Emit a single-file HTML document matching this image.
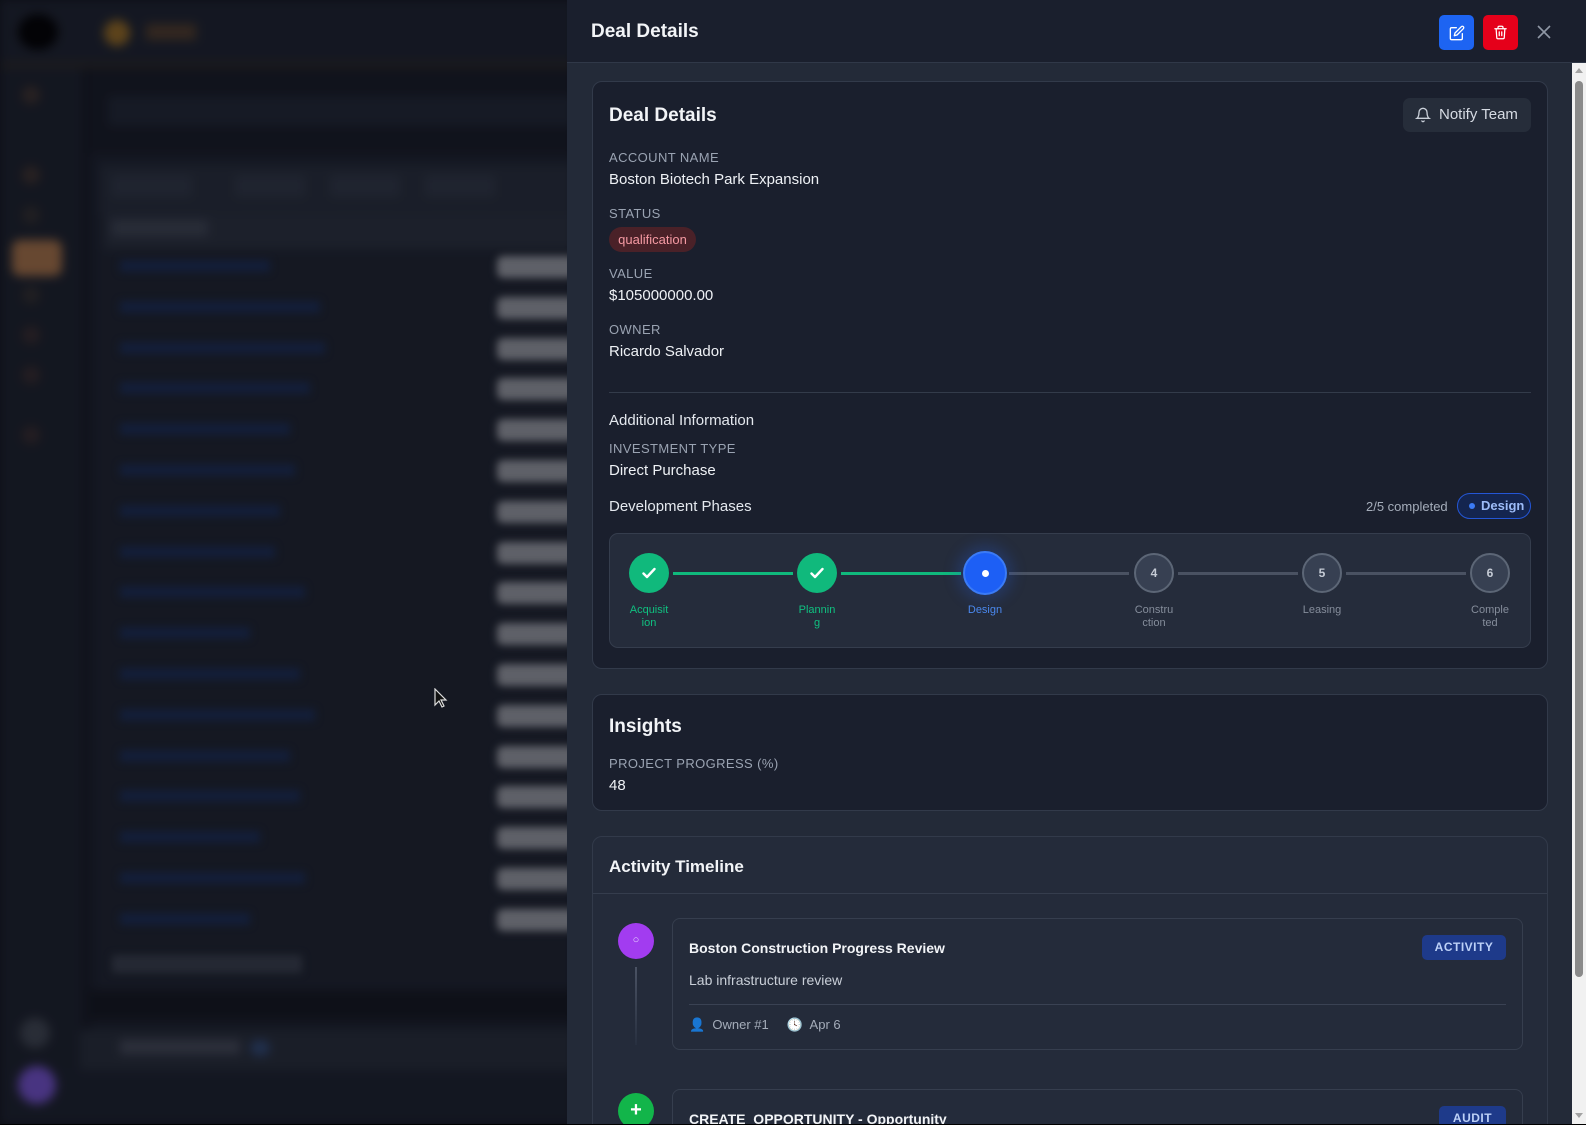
<!DOCTYPE html>
<html><head><meta charset="utf-8">
<style>
*{box-sizing:border-box;margin:0;padding:0}
html,body{width:1586px;height:1125px;overflow:hidden}
body{background:#0f1219;font-family:"Liberation Sans",sans-serif;position:relative}
.abs{position:absolute}
#bg{position:absolute;left:0;top:0;width:575px;height:1125px;background:#1a1f2a;filter:blur(5px);overflow:hidden}
#bg div{position:absolute}
#panel{position:absolute;left:567px;top:0;width:1019px;height:1124px;background:#232a38;overflow:hidden}
#hdr{position:absolute;left:0;top:0;width:1019px;height:63px;background:#1a1f2d;border-bottom:1px solid #303848}
.card{position:absolute;left:25px;width:956px;border:1px solid #323a4a;border-radius:10px;background:#1a1f2d;overflow:hidden}
.lbl{position:absolute;left:16px;font-size:13px;color:#9aa3b2;letter-spacing:.4px}
.val{position:absolute;left:16px;font-size:15px;color:#eef1f5}
.circ{position:absolute;top:19px;width:40px;height:40px;border-radius:50%;margin-left:-20px;display:flex;align-items:center;justify-content:center;font-size:12px;font-weight:bold}
.done{background:#10b97c;color:#fff}
.todo{background:#374052;border:2px solid #5c6676;color:#c5cbd5}
.line{position:absolute;top:38px;height:3px}
.plbl{position:absolute;top:70px;width:60px;margin-left:-30px;text-align:center;font-size:11px;line-height:13px}
.badge{position:absolute;background:#1e3a8a;color:#bcd0f7;font-size:12px;font-weight:bold;letter-spacing:.5px;border-radius:5px;height:25px;line-height:25px;text-align:center}
</style></head><body>
<div id="bg">
  <div style="left:0;top:0;width:575px;height:64px;background:#1b202b"></div>
  <div style="left:0;top:62px;width:575px;height:6px;background:#2a2623"></div>
  <div style="left:18px;top:14px;width:40px;height:36px;border-radius:50%;background:#000"></div>
  <div style="left:104px;top:20px;width:26px;height:26px;border-radius:50%;background:#8a6321"></div>
  <div style="left:146px;top:24px;width:50px;height:16px;background:#4a3828"></div>
  <div style="left:0;top:68px;width:82px;height:1000px;background:#1a1f29"></div>
  <div style="left:82px;top:68px;width:8px;height:1000px;background:#131720"></div>
  <div style="left:22px;top:86px;width:18px;height:18px;border-radius:50%;background:#3a2f2a"></div>
  <div style="left:22px;top:166px;width:18px;height:18px;border-radius:50%;background:#3a2f2a"></div>
  <div style="left:22px;top:206px;width:18px;height:18px;border-radius:50%;background:#2e2b2a"></div>
  <div style="left:12px;top:240px;width:50px;height:36px;border-radius:8px;background:#9a6a42"></div>
  <div style="left:22px;top:286px;width:18px;height:18px;border-radius:50%;background:#2e2b2a"></div>
  <div style="left:22px;top:326px;width:18px;height:18px;border-radius:50%;background:#33292a"></div>
  <div style="left:22px;top:366px;width:18px;height:18px;border-radius:50%;background:#33292a"></div>
  <div style="left:22px;top:426px;width:18px;height:18px;border-radius:50%;background:#33292a"></div>
  <div style="left:90px;top:68px;width:490px;height:85px;background:#151922"></div>
  <div style="left:108px;top:96px;width:470px;height:30px;background:#1e2430"></div>
  <div style="left:98px;top:160px;width:480px;height:830px;background:#1c212c"></div>
  <div style="left:100px;top:165px;width:480px;height:50px;background:#242a36"></div>
  <div style="left:112px;top:175px;width:80px;height:22px;background:#2c3340"></div>
  <div style="left:235px;top:175px;width:70px;height:22px;background:#2c3340"></div>
  <div style="left:330px;top:175px;width:70px;height:22px;background:#2c3340"></div>
  <div style="left:425px;top:175px;width:70px;height:22px;background:#2c3340"></div>
  <div style="left:104px;top:215px;width:480px;height:34px;background:#272d39"></div>
  <div style="left:112px;top:220px;width:96px;height:16px;background:#3a404c"></div>
  <div style="left:90px;top:990px;width:490px;height:30px;background:#12151d"></div>
  <div style="left:80px;top:1030px;width:500px;height:40px;background:#242a35"></div>
  <div style="left:120px;top:1040px;width:120px;height:14px;background:#404552"></div>
  <div style="left:250px;top:1040px;width:20px;height:16px;border-radius:50%;background:#2e456e"></div>
  <div style="left:20px;top:1018px;width:30px;height:30px;border-radius:50%;background:#3b414b"></div>
  <div style="left:18px;top:1066px;width:38px;height:38px;border-radius:50%;background:#6b4cbd"></div>
</div>
<div id="rows" style="position:absolute;left:0;top:0;width:575px;height:1125px;overflow:hidden;filter:blur(4px)">
</div>
<script>
var r=document.getElementById('rows'),w=[150,200,205,190,170,175,160,155,185,130,180,195,170,180,140,185,130];
for(var i=0;i<17;i++){var y=260+i*40.8;r.innerHTML+='<div class="abs" style="left:120px;top:'+y+'px;width:'+w[i]+'px;height:12px;background:#1a2a4e"></div><div class="abs" style="left:497px;top:'+(y-4)+'px;width:78px;height:22px;border-radius:6px;background:#8d9097"></div>';}
r.innerHTML+='<div class="abs" style="left:112px;top:955px;width:190px;height:18px;background:#353b47"></div>';
</script>
<div class="abs" style="left:0;top:0;width:567px;height:1125px;background:rgba(8,10,16,0.35)"></div>

<div id="panel">
  <div id="hdr">
    <div class="abs" style="left:24px;top:21px;font-size:19px;font-weight:bold;color:#f2f4f7">Deal Details</div>
    <div class="abs" style="left:872px;top:15px;width:35px;height:35px;border-radius:5px;background:#1d64f2;display:flex;align-items:center;justify-content:center">
      <svg width="16" height="16" viewBox="0 0 24 24" fill="none" stroke="#fff" stroke-width="2" stroke-linecap="round" stroke-linejoin="round"><path d="M11 4H4a2 2 0 0 0-2 2v14a2 2 0 0 0 2 2h14a2 2 0 0 0 2-2v-7"/><path d="M18.5 2.5a2.1 2.1 0 0 1 3 3L12 15l-4 1 1-4z"/></svg>
    </div>
    <div class="abs" style="left:916px;top:15px;width:35px;height:35px;border-radius:5px;background:#e5001a;display:flex;align-items:center;justify-content:center">
      <svg width="15" height="15" viewBox="0 0 24 24" fill="none" stroke="#fff" stroke-width="2" stroke-linecap="round" stroke-linejoin="round"><path d="M3 6h18"/><path d="M8 6V4a2 2 0 0 1 2-2h4a2 2 0 0 1 2 2v2"/><path d="M19 6l-1 14a2 2 0 0 1-2 2H8a2 2 0 0 1-2-2L5 6"/><path d="M10 11v6M14 11v6"/></svg>
    </div>
    <svg class="abs" style="left:969px;top:24px" width="16" height="16" viewBox="0 0 16 16" stroke="#8f97a5" stroke-width="1.6"><path d="M2 2l12 12M14 2L2 14"/></svg>
  </div>

  <div class="card" style="top:81px;height:588px">
    <div class="abs" style="left:16px;top:23px;font-size:19px;font-weight:bold;color:#f2f4f7">Deal Details</div>
    <div class="abs" style="left:810px;top:16px;width:128px;height:34px;border-radius:7px;background:#262d3a;color:#d6dbe3;font-size:15px;line-height:34px;padding-left:36px">Notify Team
      <svg class="abs" style="left:12px;top:9px" width="16" height="16" viewBox="0 0 24 24" fill="none" stroke="#c9cfd8" stroke-width="2" stroke-linecap="round"><path d="M6 8a6 6 0 0 1 12 0c0 7 3 9 3 9H3s3-2 3-9"/><path d="M10.3 21a1.9 1.9 0 0 0 3.4 0"/></svg>
    </div>
    <div class="lbl" style="top:68px">ACCOUNT NAME</div>
    <div class="val" style="top:89px">Boston Biotech Park Expansion</div>
    <div class="lbl" style="top:124px">STATUS</div>
    <div class="abs" style="left:16px;top:145px;width:87px;height:25px;border-radius:13px;background:#4a2128;color:#f59aa3;font-size:13px;line-height:25px;text-align:center">qualification</div>
    <div class="lbl" style="top:184px">VALUE</div>
    <div class="val" style="top:205px">$105000000.00</div>
    <div class="lbl" style="top:240px">OWNER</div>
    <div class="val" style="top:261px">Ricardo Salvador</div>
    <div class="abs" style="left:16px;top:310px;width:922px;height:1px;background:#333b4a"></div>
    <div class="val" style="top:330px;color:#e4e8ee">Additional Information</div>
    <div class="lbl" style="top:359px">INVESTMENT TYPE</div>
    <div class="val" style="top:380px">Direct Purchase</div>
    <div class="val" style="top:416px;color:#e4e8ee">Development Phases</div>
    <div class="abs" style="left:773px;top:417px;font-size:13px;color:#a5adba">2/5 completed</div>
    <div class="abs" style="left:864px;top:411px;width:74px;height:26px;border-radius:13px;border:1.5px solid #2456d6;background:#14254f;color:#9dbcf8;font-size:13px;font-weight:bold;line-height:23px;padding-left:23px">Design<span class="abs" style="left:11px;top:9px;width:6px;height:6px;border-radius:50%;background:#3b7bf6"></span></div>
    <div class="abs" style="left:16px;top:451px;width:922px;height:115px;border:1px solid #353d4d;border-radius:9px;background:#252c3b">
      <div class="line" style="left:63px;width:120px;background:#10b97c"></div>
      <div class="line" style="left:231px;width:120px;background:#10b97c"></div>
      <div class="line" style="left:399px;width:120px;background:#4a5262"></div>
      <div class="line" style="left:568px;width:120px;background:#4a5262"></div>
      <div class="line" style="left:736px;width:120px;background:#4a5262"></div>
      <div class="circ done" style="left:39px"><svg width="14" height="12" viewBox="0 0 14 12" fill="none" stroke="#fff" stroke-width="2.4" stroke-linecap="round" stroke-linejoin="round"><path d="M1.5 6.5l3.5 3.5 7.5-8"/></svg></div>
      <div class="circ done" style="left:207px"><svg width="14" height="12" viewBox="0 0 14 12" fill="none" stroke="#fff" stroke-width="2.4" stroke-linecap="round" stroke-linejoin="round"><path d="M1.5 6.5l3.5 3.5 7.5-8"/></svg></div>
      <div class="circ" style="left:375px;top:17px;width:44px;height:44px;margin-left:-22px;background:#1d5ff5;border:2px solid #3b7bf6;box-shadow:0 0 14px 6px rgba(40,90,220,.25)"><span style="width:7px;height:7px;border-radius:50%;background:#fff"></span></div>
      <div class="circ todo" style="left:544px">4</div>
      <div class="circ todo" style="left:712px">5</div>
      <div class="circ todo" style="left:880px">6</div>
      <div class="plbl" style="left:39px;color:#10c080">Acquisit<br>ion</div>
      <div class="plbl" style="left:207px;color:#10c080">Plannin<br>g</div>
      <div class="plbl" style="left:375px;color:#4a88ee">Design</div>
      <div class="plbl" style="left:544px;color:#858d9b">Constru<br>ction</div>
      <div class="plbl" style="left:712px;color:#858d9b">Leasing</div>
      <div class="plbl" style="left:880px;color:#858d9b">Comple<br>ted</div>
    </div>
  </div>

  <div class="card" style="top:694px;height:117px">
    <div class="abs" style="left:16px;top:21px;font-size:19px;font-weight:bold;color:#f2f4f7">Insights</div>
    <div class="lbl" style="top:61px">PROJECT PROGRESS (%)</div>
    <div class="val" style="top:82px">48</div>
  </div>

  <div class="card" style="top:836px;height:300px;background:#242b3a">
    <div class="abs" style="left:16px;top:20px;font-size:17px;font-weight:bold;color:#f2f4f7">Activity Timeline</div>
    <div class="abs" style="left:0;top:56px;width:954px;height:1px;background:#353d4d"></div>
    <div class="abs" style="left:25px;top:86px;width:36px;height:36px;border-radius:50%;background:#a23cf0;color:#e9d6ff;font-size:11px;text-align:center;line-height:34px">○</div>
    <div class="abs" style="left:42px;top:130px;width:2px;height:78px;background:linear-gradient(#4a5263,#283040)"></div>
    <div class="abs" style="left:79px;top:81px;width:851px;height:132px;border:1px solid #363e4e;border-radius:8px">
      <div class="abs" style="left:16px;top:21px;font-size:14px;font-weight:bold;color:#f2f4f7">Boston Construction Progress Review</div>
      <div class="badge" style="left:749px;top:16px;width:84px">ACTIVITY</div>
      <div class="abs" style="left:16px;top:53px;font-size:14px;color:#c9cfd8">Lab infrastructure review</div>
      <div class="abs" style="left:16px;top:85px;width:817px;height:1px;background:#3a4253"></div>
      <div class="abs" style="left:16px;top:98px;font-size:13px;color:#a5adba"><span style="color:#3a8ae8">&#128100;</span>&nbsp; Owner #1 &nbsp;&nbsp;&nbsp; <span style="color:#ddd">&#128339;</span>&nbsp; Apr 6</div>
    </div>
    <div class="abs" style="left:25px;top:256px;width:36px;height:36px;border-radius:50%;background:#12b54a;color:#fff;font-size:20px;font-weight:bold;text-align:center;line-height:35px">+</div>
    <div class="abs" style="left:79px;top:252px;width:851px;height:132px;border:1px solid #363e4e;border-radius:8px">
      <div class="abs" style="left:16px;top:21px;font-size:14px;font-weight:bold;color:#f2f4f7">CREATE_OPPORTUNITY - Opportunity</div>
      <div class="badge" style="left:766px;top:16px;width:67px">AUDIT</div>
    </div>
  </div>

  <div class="abs" style="left:1005px;top:63px;width:14px;height:1061px;background:#f1f1f1">
    <div class="abs" style="left:3px;top:5px;width:0;height:0;border-left:4px solid transparent;border-right:4px solid transparent;border-bottom:5px solid #a3a3a3"></div>
    <div class="abs" style="left:3px;top:18px;width:8px;height:896px;border-radius:4px;background:#8a8a8a"></div>
    <div class="abs" style="left:3px;top:1050px;width:0;height:0;border-left:4px solid transparent;border-right:4px solid transparent;border-top:5px solid #a3a3a3"></div>
  </div>
</div>
<div class="abs" style="left:0;top:1124px;width:1586px;height:1px;background:#000"></div>
<svg class="abs" style="left:434px;top:688px" width="14" height="20" viewBox="0 0 14 20"><path d="M1 1v16l4-4 3 6 2-1-3-6h5z" fill="#111" stroke="#ddd" stroke-width="1.2"/></svg>
</body></html>
